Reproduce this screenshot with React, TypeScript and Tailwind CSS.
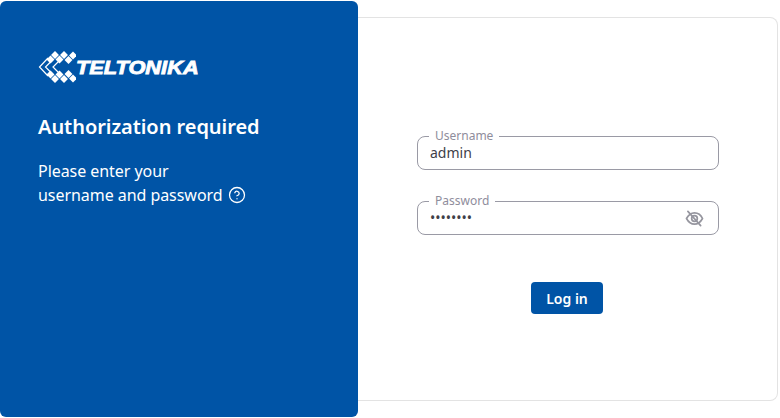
import { CircleHelp } from 'lucide-react';

function Logo() {
  const d = [
    [17, 5], [26, 5], [35, 5.5],
    [12.5, 9.5], [21.5, 9.5], [30.5, 10],
    [12.5, 24.5], [21.5, 24.5], [30.5, 24],
    [17, 29], [26, 29], [35, 28.5],
  ];
  return (
    <div className="flex items-center h-[34px]">
      <svg width="38" height="34" viewBox="0 0 38 34" className="shrink-0">
        <path d="M10 8 L1.500 17 L10 26 M15.500 9 L7.500 17 L15.500 25 M21 11 L15 17 L21 23" fill="none" stroke="#fff" strokeWidth="1.200" />
        {d.map(([x, y]) => (
          <rect key={`${x}-${y}`} x={x - 2.8} y={y - 2.8} width="5.600" height="5.600" fill="#fff" transform={`rotate(45 ${x} ${y})`} />
        ))}
      </svg>
      <span className="inline-block origin-left scale-x-[1.21] mt-[1px] font-['Liberation_Sans',sans-serif] font-bold italic text-[18px] leading-none text-white [-webkit-text-stroke:0.8px_white]">
        TELTONIKA
      </span>
    </div>
  );
}

function EyeSlash() {
  return (
    <svg width="19" height="17" viewBox="0 0 20 18" fill="none" stroke="#96969f" strokeWidth="1.800" strokeLinecap="round" strokeLinejoin="round">
      <path d="M1.500 9 C4 4.500 7 3 10 3 C13 3 16.500 4.500 18.500 9 C16 13.500 13 15 10 15 C7 15 4 13.500 1.500 9 Z" />
      <circle cx="10" cy="9" r="3" />
      <path d="M3 1.500 L16.500 16.500" />
    </svg>
  );
}

function Field({ label, value, password }: { label: string; value: string; password?: boolean }) {
  return (
    <div className="relative h-[34px] rounded-[8px] border border-[#9a9aa5] flex items-center justify-between pl-[12px] pr-[14px]">
      <span className="absolute -top-[9px] left-[11px] bg-white px-[6px] text-[12px] leading-[16px] text-[#8f8d9c]">
        {label}
      </span>
      <span className="text-[14px] leading-[20px] text-[#404048]">
        {value}
      </span>
      {password && <EyeSlash />}
    </div>
  );
}

export default function App() {
  return (
    <div className="flex items-center w-[780px] h-[418px] bg-white overflow-hidden font-['Noto_Sans',sans-serif]">
      <div className="w-[358px] h-[416px] shrink-0 rounded-[6px] bg-[#0054a6] pt-[49px] pl-[38px] text-white">
        <Logo />
        <h1 className="mt-[29px] text-[20px] leading-[28px] font-semibold tracking-[-0.05px]">Authorization required</h1>
        <p className="mt-[18px] text-[16px] leading-[24px] tracking-[-0.05px]">
          Please enter your
          <br />
          <span className="inline-flex items-center gap-[5px]">
            username and password
            <CircleHelp size={18} strokeWidth={1.7} />
          </span>
        </p>
      </div>
      <div className="w-[420px] h-[384px] shrink-0 rounded-r-[8px] border border-l-0 border-[#e3e3e3] flex flex-col items-center pt-[118px]">
        <div className="w-[302px] ml-[1px] flex flex-col gap-[31px]">
          <Field label="Username" value="admin" />
          <Field label="Password" value="••••••••" password />
        </div>
        <button className="mt-[47px] -ml-[1px] w-[72px] h-[32px] rounded-[4px] bg-[#0054a6] text-white text-[14px] font-semibold">
          Log in
        </button>
      </div>
    </div>
  );
}
